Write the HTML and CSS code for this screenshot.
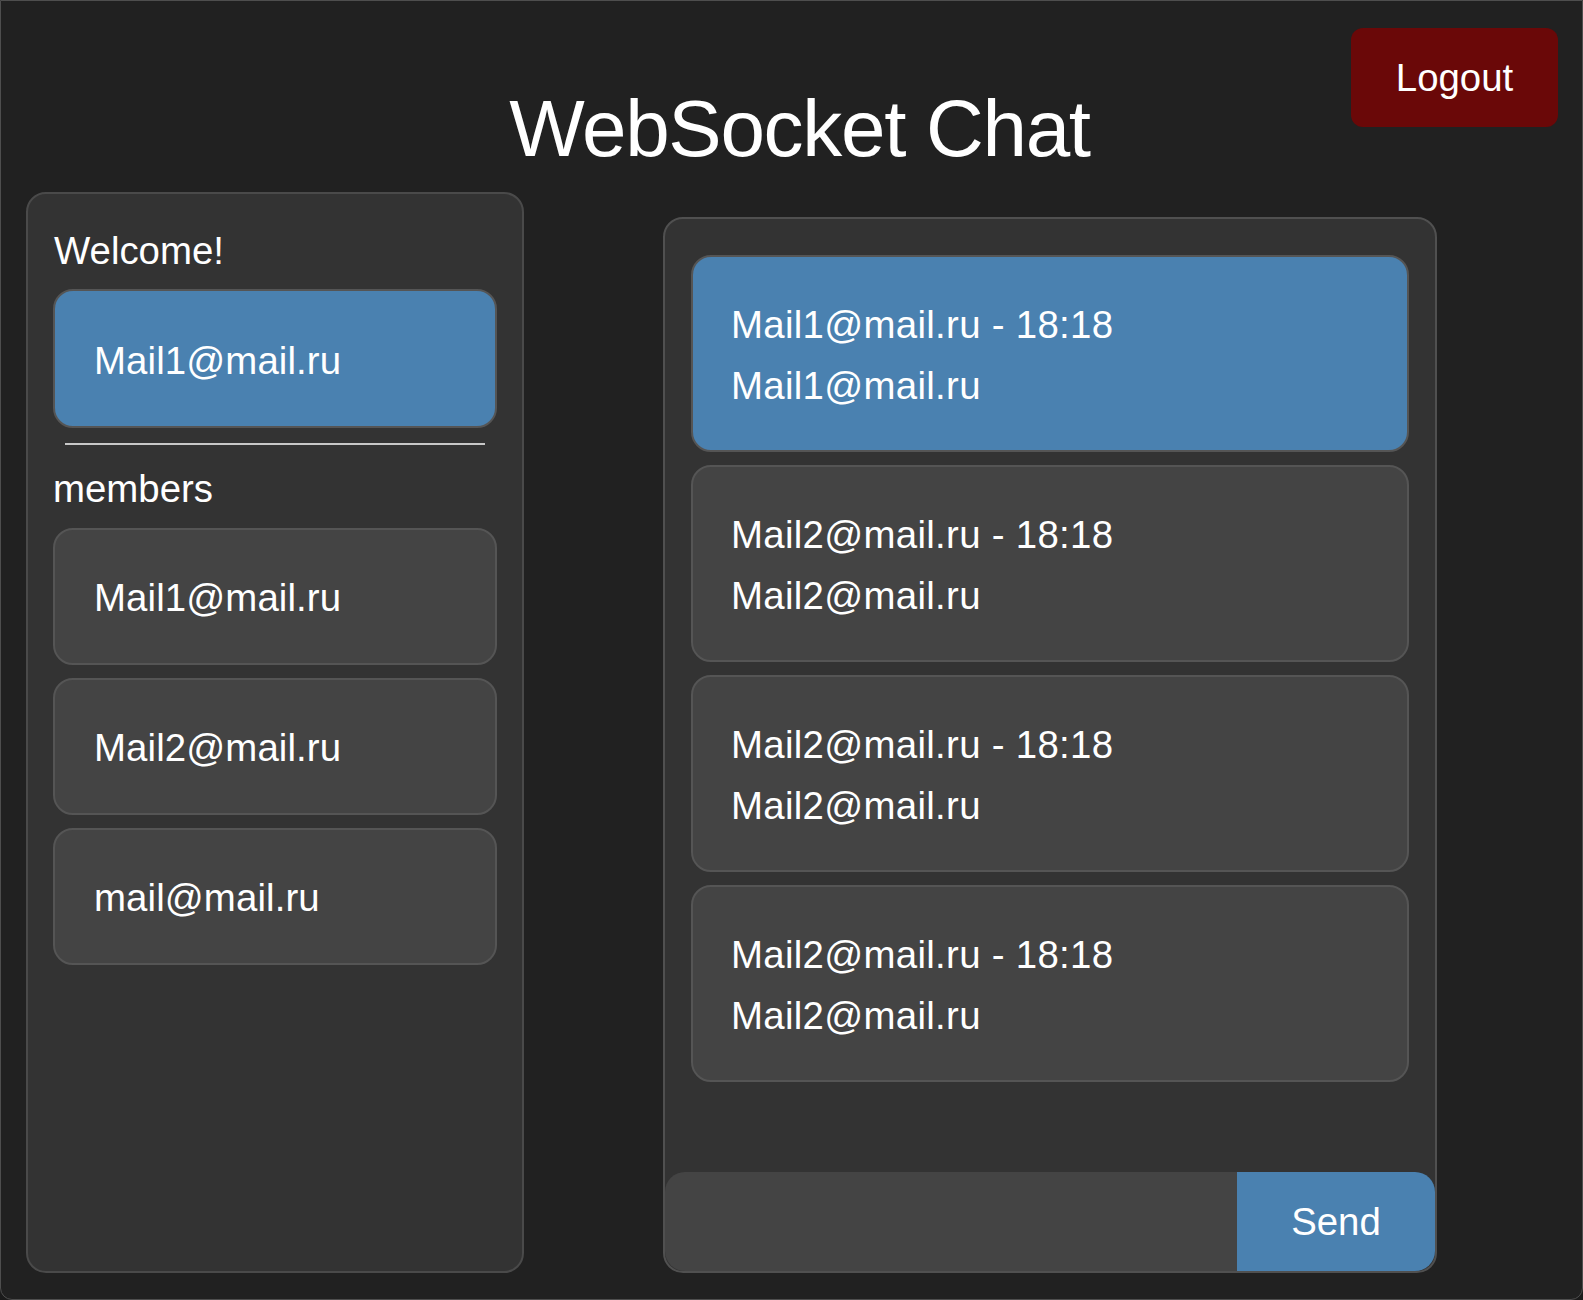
FILE: index.html
```html
<!DOCTYPE html>
<html lang="en">
<head>
<meta charset="utf-8">
<title>WebSocket Chat</title>
<link rel="stylesheet" href="styles.css">
</head>
<body>
<div class="window">
  <header class="header">
    <h1 class="title">WebSocket Chat</h1>
    <button class="logout">Logout</button>
  </header>
  <main class="main">
    <aside class="sidebar">
      <div class="welcome">Welcome!</div>
      <div class="card card-active">Mail1@mail.ru</div>
      <hr class="divider">
      <div class="members-label">members</div>
      <div class="members">
        <div class="card member">Mail1@mail.ru</div>
        <div class="card member">Mail2@mail.ru</div>
        <div class="card member">mail@mail.ru</div>
      </div>
    </aside>
    <section class="chat">
      <div class="messages">
        <div class="msg msg-own">
          <div class="msg-line">Mail1@mail.ru - 18:18</div>
          <div class="msg-line msg-text">Mail1@mail.ru</div>
        </div>
        <div class="msg">
          <div class="msg-line">Mail2@mail.ru - 18:18</div>
          <div class="msg-line msg-text">Mail2@mail.ru</div>
        </div>
        <div class="msg">
          <div class="msg-line">Mail2@mail.ru - 18:18</div>
          <div class="msg-line msg-text">Mail2@mail.ru</div>
        </div>
        <div class="msg">
          <div class="msg-line">Mail2@mail.ru - 18:18</div>
          <div class="msg-line msg-text">Mail2@mail.ru</div>
        </div>
      </div>
      <form class="composer">
        <input class="composer-input" type="text">
        <button class="send" type="button">Send</button>
      </form>
    </section>
  </main>
</div>
</body>
</html>
```

FILE: styles.css
```css
* {
  box-sizing: border-box;
}

html, body {
  margin: 0;
  padding: 0;
  background: #1b1b1b;
}

body {
  font-family: "Liberation Sans", Arial, sans-serif;
  color: #ffffff;
  font-size: 38.4px;
  line-height: 44px;
}

.window {
  width: 1583px;
  height: 1300px;
  background: #212121;
  border: 1px solid #4e4e4e;
  border-radius: 0 0 12px 12px;
  overflow: hidden;
}

.header {
  display: grid;
  grid-template-columns: 1fr auto 1fr;
  align-items: start;
  padding-top: 27px;
  padding-right: 24px;
}

.title {
  grid-column: 2;
  margin: 55px 0 0 0;
  padding-left: 40px;
  font-size: 80px;
  line-height: 92px;
  font-weight: 400;
  letter-spacing: -1.3px;
  white-space: nowrap;
}

.logout {
  grid-column: 3;
  justify-self: end;
  width: 207px;
  height: 99px;
  border: none;
  border-radius: 12px;
  background: #6a0808;
  color: #ffffff;
  font-family: inherit;
  font-size: 38.4px;
  line-height: 44px;
  padding: 0;
}

.main {
  display: flex;
  align-items: flex-start;
  padding-left: 25px;
  margin-top: 17px;
}

.sidebar {
  width: 498px;
  height: 1081px;
  background: #333333;
  border: 2px solid #4a4a4a;
  border-radius: 20px;
  padding: 34.7px 25px 0 25px;
}

.welcome {
  padding-left: 1px;
}

.card {
  border: 2px solid #555555;
  border-radius: 20px;
  background: #444444;
  padding: 48.5px 39px 42.5px 39px;
  letter-spacing: 0.1px;
}

.card-active {
  margin-top: 16.3px;
  background: #4a81b0;
}

.divider {
  margin: 15px 12px 0 12px;
  border: none;
  height: 2px;
  background: #c8c8c8;
}

.members-label {
  margin-top: 21.7px;
}

.members {
  margin-top: 17.3px;
  display: flex;
  flex-direction: column;
  gap: 13px;
}

.member {
  padding-top: 46.5px;
  padding-bottom: 42.5px;
}

.chat {
  width: 774px;
  height: 1056px;
  margin-left: 139px;
  margin-top: 25px;
  background: #333333;
  border: 2px solid #505050;
  border-radius: 20px;
  display: flex;
  flex-direction: column;
  justify-content: space-between;
}

.messages {
  padding: 36px 26px 0 26px;
  display: flex;
  flex-direction: column;
  gap: 13px;
}

.msg {
  height: 197px;
  border: 2px solid #555555;
  border-radius: 20px;
  background: #444444;
  padding: 46.2px 39px 0 38px;
  letter-spacing: 0.3px;
}

.msg-own {
  background: #4a81b0;
}

.msg-text {
  margin-top: 17px;
}

.composer {
  display: flex;
  height: 99px;
  margin: 0;
  border-radius: 20px;
  overflow: hidden;
}

.composer-input {
  flex: 1;
  min-width: 0;
  border: none;
  outline: none;
  background: #444444;
  color: #ffffff;
  font-family: inherit;
  font-size: 38.4px;
  padding: 0 24px;
}

.send {
  width: 198px;
  border: none;
  background: #4a81b0;
  color: #ffffff;
  font-family: inherit;
  font-size: 38.4px;
  line-height: 44px;
  padding: 0;
}
```
